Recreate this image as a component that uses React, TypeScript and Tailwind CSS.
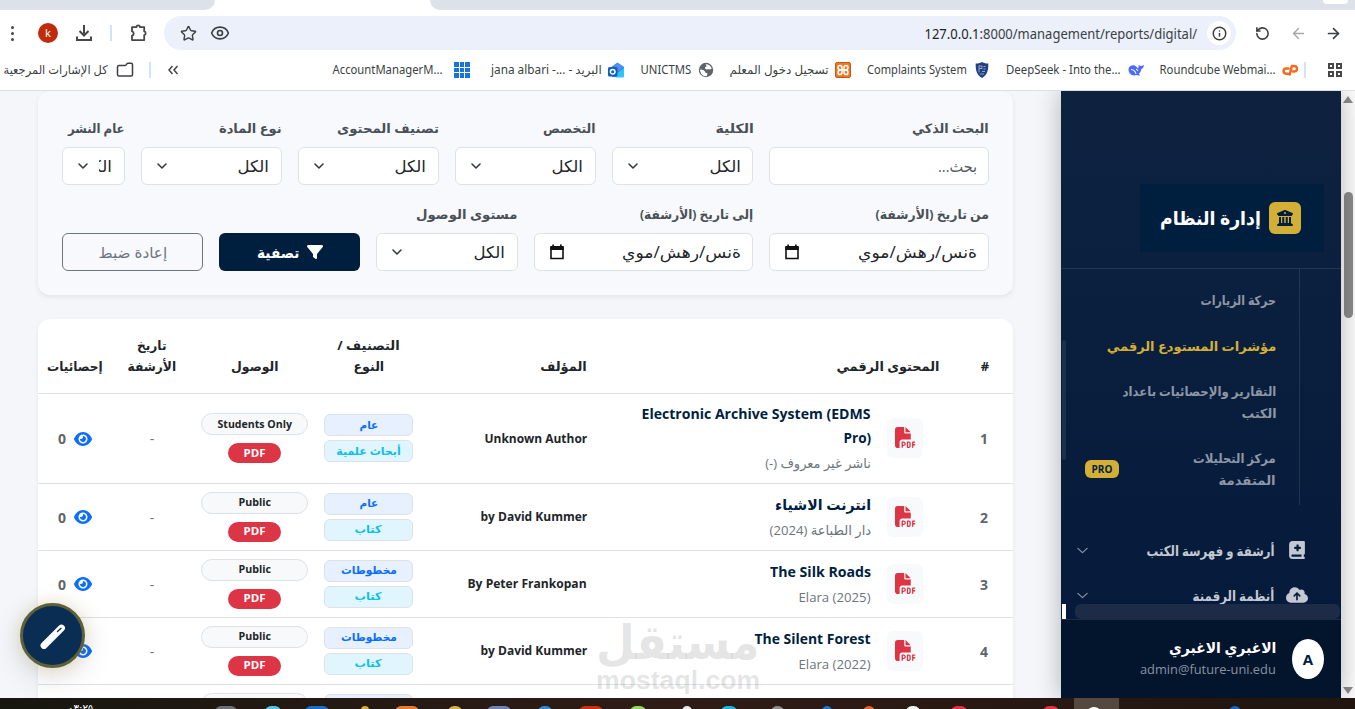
import React from 'react';
import { FaBookMedical, FaBuildingColumns, FaCloudArrowUp, FaEye, FaFilePdf, FaFilter } from 'react-icons/fa6';
import { ArrowLeft, ArrowRight, ChevronDown, Eye, Folder, Info, RotateCcw, Star } from 'lucide-react';
import clsx from 'clsx';

interface FitProps {
  w: number;
  children: React.ReactNode;
  className?: string;
  dir?: 'rtl' | 'ltr' | 'auto';
}

/** One line of text squeezed or stretched horizontally to a fixed width */
const Fit: React.FC<FitProps> = ({ w, children, className, dir = 'auto' }) => {
  const ref = React.useRef<HTMLSpanElement>(null);
  const [scale, setScale] = React.useState(1);

  React.useLayoutEffect(() => {
    if (ref.current && ref.current.offsetWidth > 0) setScale(w / ref.current.offsetWidth);
  }, [w, children]);

  return (
    <span className="flex shrink-0 justify-center" style={{ width: w }}>
      <span
        ref={ref}
        dir={dir}
        className={clsx('inline-block shrink-0 whitespace-nowrap', className)}
        style={{ transform: `scaleX(${scale})` }}
      >
        {children}
      </span>
    </span>
  );
};

/* ---------- Browser chrome ---------- */

const PuzzleIcon = () => (
  <svg viewBox="0 0 20 20" className="h-5 w-5" fill="none" stroke="#474747" strokeWidth="1.8">
    <path d="M3 4.200h4.400a1.800 1.800 0 0 1 3.600 0h4.200v4.200a1.900 1.900 0 0 1 0 3.700v5H3v-4.400a2.200 2.200 0 0 0 0-4.300z" strokeLinejoin="round" />
  </svg>
);

const DownloadIcon = () => (
  <svg viewBox="0 0 18 18" className="h-[18px] w-[18px]" fill="none" stroke="#474747" strokeWidth="2">
    <path d="M9 1v10M4.500 7 9 11.500 13.500 7M2 12.500V16h14v-3.500" />
  </svg>
);

const AppsIcon = () => (
  <span className="grid h-4 w-4 grid-cols-3 gap-px">
    {Array.from({ length: 9 }, (_, i) => (
      <span key={i} className="bg-[#1a73d8]" />
    ))}
  </span>
);

const OutlookIcon = () => (
  <svg viewBox="0 0 16 16" className="h-4 w-4">
    <path d="M4 4.500 9.500.5 16 5v8.500a1.500 1.500 0 0 1-1.500 1.500H4z" fill="#1f8fe8" />
    <path d="m6 4 3.500-3.200 6 4L10 9z" fill="#5a8cf5" />
    <path d="m16 6-8 6v3.500h6.500A1.500 1.500 0 0 0 16 14z" fill="#2cc5f6" />
    <rect x="0" y="5" width="9.500" height="9.500" rx="1.500" fill="#0f5fc0" />
    <circle cx="4.700" cy="9.700" r="2.300" fill="none" stroke="#fff" strokeWidth="1.500" />
  </svg>
);

const GlobeIcon = () => (
  <svg viewBox="0 0 16 16" className="h-4 w-4">
    <circle cx="8" cy="8" r="7.200" fill="#5f6368" />
    <path d="M2 7.500c2 0 3.500.5 4.500 1.500s.5 2 2 2 1 1.800.2 3.200C5 14.500 2.200 12 2 7.500zM7.500 2.300c2-.4 5 .7 6.200 4.200-1.400 1.700-3 .2-4 .8-1.300.5-2.900-.2-2.700-1.500.2-1 1.600-.7 1.700-1.700z" fill="#fff" />
  </svg>
);

const XamppIcon = () => (
  <svg viewBox="0 0 16 16" className="h-4 w-4">
    <rect x=".5" y=".5" width="15" height="15" rx="1.500" fill="#f37623" stroke="#c25a13" />
    <path d="M5 8h6M5.800 8C3.400 8 3 6.800 3 5.600S3.800 3.500 5 3.500 7 4.500 7 6v4c0 1.500-.8 2.500-2 2.500s-2-.9-2-2.100S3.500 8 5.800 8zM10.200 8C12.600 8 13 6.800 13 5.600s-.8-2.100-2-2.100S9 4.500 9 6v4c0 1.500.8 2.500 2 2.500s2-.9 2-2.100S12.500 8 10.200 8z" fill="none" stroke="#fff" strokeWidth="1.500" />
  </svg>
);

const ShieldIcon = () => (
  <svg viewBox="0 0 16 16" className="h-4 w-4">
    <path d="M8 0c2 1.200 4 1.600 6.300 1.600C14.500 8 13.500 13 8 16 2.500 13 1.500 8 1.700 1.600 4 1.600 6 1.200 8 0z" fill="#23407c" />
    <path d="M5 3.500v7M5 4h3v2.500H5M9.500 4.500h2M9.500 7h2M8 9.500h3M6 12h4" fill="none" stroke="#8fa6d6" strokeWidth="1" />
  </svg>
);

const DeepSeekIcon = () => (
  <svg viewBox="0 0 16 16" className="h-4 w-4">
    <path d="M.5 7C1 4 4 2.800 6.500 3.500 8 4 9 5 10 6.500c.8-1 .5-2.300.7-3.500 1 1 2 1.200 3 1 .8-.2 1.500-.6 2.100-1.200.1 2-.7 3.700-2.600 4.400-.2 2.300-1.200 3.600-2.400 4.800l1.500 1.200c-1.400.5-2.600.3-3.800-.2C4 14.600.2 11.300.5 7z" fill="#4d6bfe" />
    <path d="M3 7.500c2.500.2 4.300 2 5 4.300M8 7.300c1 0 1.500.8 1.700 1.700" fill="none" stroke="#fff" strokeWidth="1.100" />
  </svg>
);

/** cPanel mark */
const CpanelIcon = () => (
  <svg viewBox="0 0 16 16" className="h-4 w-4" fill="none" stroke="#f26b22" strokeWidth="2.500" strokeLinecap="round">
    <path d="M6.500 6.500H4.200a2.600 2.600 0 0 0 0 5.200h1.500M7.700 12.500l2.200-8.500h2.300a2.800 2.800 0 0 1 0 5.600H11" />
  </svg>
);

const BOOKMARKS = [
  { label: 'AccountManagerM...', w: 110, icon: <AppsIcon />, cls: 'gap-3 mr-[21px]' },
  { label: 'البريد - ...- jana albari', w: 111, icon: <OutlookIcon />, cls: 'gap-1.5 mr-4' },
  { label: 'UNICTMS', w: 51, icon: <GlobeIcon />, cls: 'gap-[7px] mr-4' },
  { label: 'تسجيل دخول المعلم', w: 99, icon: <XamppIcon />, cls: 'gap-1.5 mr-4' },
  { label: 'Complaints System', w: 100, icon: <ShieldIcon />, cls: 'gap-[7px] mr-4' },
  { label: 'DeepSeek - Into the...', w: 115, icon: <DeepSeekIcon />, cls: 'gap-[7px] mr-4' },
  { label: 'Roundcube Webmai...', w: 116, icon: <CpanelIcon />, cls: 'gap-1.5' },
];

const BrowserBar = () => (
  <header className="h-[91px] shrink-0 border-b border-[#dcdfdf] bg-white font-['Noto_Sans','DejaVu_Sans',sans-serif] text-[#3c3f43]">
    {/* Tab strip */}
    <div className="flex h-2.5 bg-white">
      <div className="w-[215px] rounded-br-[10px] bg-[#dde1e9]" />
      <div className="w-[215px]" />
      <div className="flex flex-1 justify-end rounded-bl-[10px] bg-[#dde1e9]">
        <div className="mr-[7px] h-1 w-[25px] rounded-b-[10px] bg-white" />
      </div>
    </div>

    {/* Address bar */}
    <div className="flex h-[46px] items-center">
      <span className="flex w-6 flex-col items-center gap-[3px]">
        {[0, 1, 2].map(i => (
          <span key={i} className="h-[3px] w-[3px] rounded-full bg-[#474747]" />
        ))}
      </span>
      <span className="ml-3.5 flex h-5 w-5 items-center justify-center rounded-full bg-[#bf2c0b] text-[11px] text-white">k</span>
      <span className="ml-[17px]"><DownloadIcon /></span>
      <span className="ml-[17px] h-4 w-0.5 bg-[#d3e3fd]" />
      <span className="ml-[17px]"><PuzzleIcon /></span>
      <div className="ml-[15px] flex h-[34px] w-[1072px] items-center rounded-full bg-[#ebf0fa] pr-[5px] pl-4">
        <Star size={17} strokeWidth={2} />
        <Eye size={20} strokeWidth={2} className="ml-[13px]" />
        <span className="ml-auto flex text-[14px]">
          <Fit w={273} dir="ltr">
            <span className="text-[#1f1f1f]">127.0.0.1</span>:8000/management/reports/digital/
          </Fit>
        </span>
        <span className="ml-[10px] flex h-6 w-6 items-center justify-center rounded-full bg-white">
          <Info size={15} strokeWidth={2.4} />
        </span>
      </div>
      <RotateCcw size={15} strokeWidth={2.5} className="ml-[19px]" />
      <ArrowLeft size={17} strokeWidth={2} className="ml-5 text-[#a5a7ab]" />
      <ArrowRight size={17} strokeWidth={2.4} className="ml-[18px]" />
    </div>

    {/* Bookmarks */}
    <div className="flex h-7 items-center text-[12px]">
      <span className="ml-1 flex"><Fit w={104}>كل الإشارات المرجعية</Fit></span>
      <Folder size={18} strokeWidth={2} className="ml-2 -scale-x-100" />
      <span className="ml-[15px] h-4 w-0.5 bg-[#d3e3fd]" />
      <svg viewBox="0 0 12 10" className="ml-4 h-2.5 w-3" fill="none" stroke="#474747" strokeWidth="1.500">
        <path d="M5.500 1 2 5l3.500 4M10.500 1 7 5l3.500 4" />
      </svg>
      <div className="ml-[153px] flex items-center">
        {BOOKMARKS.map(b => (
          <span key={b.label} className={clsx('flex items-center', b.cls)}>
            <Fit w={b.w}>{b.label}</Fit>
            {b.icon}
          </span>
        ))}
      </div>
      <span className="ml-1.5 h-4 w-0.5 bg-[#d3e3fd]" />
      <span className="ml-[22px] grid grid-cols-2 gap-0.5">
        {[0, 1, 2, 3].map(i => (
          <span key={i} className="h-[6px] w-[6px] border-2 border-[#474747]" />
        ))}
      </span>
    </div>
  </header>
);

/* ---------- Filters ---------- */

const Field: React.FC<{ label: string; w: number; span: string; children: React.ReactNode }> = ({ label, w, span, children }) => (
  <div className={span}>
    <div className="mb-2 flex h-[21px] items-center text-[13px] font-bold text-[#495057]">
      <Fit w={w} dir="rtl">{label}</Fit>
    </div>
    <div className="flex h-[38px] items-center rounded-md border border-[#dee2e6] bg-white px-[11px] text-[16px] text-[#212529]">
      {children}
    </div>
  </div>
);

const SelectBody = () => (
  <>
    <span className="mr-px flex"><Fit w={31}>الكل</Fit></span>
    <ChevronDown size={16} strokeWidth={2.4} className="mr-auto ml-px shrink-0 text-[#343a40]" />
  </>
);

const DateBody = () => (
  <>
    <Fit w={119} dir="rtl">ةنس/رهش/موي</Fit>
    <svg viewBox="0 0 14 16" className="mr-auto ml-1 h-4 w-3.5">
      <path d="M1 3.500h12V14.500H1z" fill="none" stroke="#111" strokeWidth="1.600" />
      <path d="M.3 2h13.400v4H.3zM2.300.5h1.700V2H2.300zM10 .5h1.700V2H10z" fill="#111" />
    </svg>
  </>
);

const FilterCard = () => (
  <section className="h-[204px] rounded-xl bg-[#f8f9fc] px-6 pt-[27px] shadow-[0_2px_5px_rgba(0,0,0,0.08)]">
    <div className="grid grid-cols-12 gap-x-4 gap-y-[19px]">
      <Field label="البحث الذكي" w={77} span="col-span-3">
        <span className="text-[#595c5f]"><Fit w={39} dir="rtl">بحث...</Fit></span>
      </Field>
      <Field label="الكلية" w={38} span="col-span-2"><SelectBody /></Field>
      <Field label="التخصص" w={53} span="col-span-2"><SelectBody /></Field>
      <Field label="تصنيف المحتوى" w={102} span="col-span-2"><SelectBody /></Field>
      <Field label="نوع المادة" w={63} span="col-span-2"><SelectBody /></Field>
      <Field label="عام النشر" w={57} span="col-span-1">
        <span className="mr-px flex w-[13px] overflow-hidden"><Fit w={31}>الكل</Fit></span>
        <ChevronDown size={16} strokeWidth={2.4} className="mr-auto ml-px shrink-0 text-[#343a40]" />
      </Field>
      <Field label="من تاريخ (الأرشفة)" w={113} span="col-span-3"><DateBody /></Field>
      <Field label="إلى تاريخ (الأرشفة)" w={113} span="col-span-3"><DateBody /></Field>
      <Field label="مستوى الوصول" w={102} span="col-span-2"><SelectBody /></Field>
      <button className="col-span-2 mt-[29px] flex h-[38px] items-center justify-center gap-2 rounded-md bg-[#001f3f] text-[15px] font-semibold text-white">
        <FaFilter size={16} />
        <Fit w={42}>تصفية</Fit>
      </button>
      <button className="col-span-2 mt-[29px] flex h-[38px] items-center justify-center rounded-md border border-[#6c757d] text-[15px] text-[#6c757d]">
        <Fit w={69}>إعادة ضبط</Fit>
      </button>
    </div>
  </section>
);

/* ---------- Table ---------- */

interface Line {
  text: string;
  w: number;
}

interface BookRow {
  title: Line[];
  sub: Line;
  author: Line;
  category: Line;
  kind: Line;
  access: Line;
}

const PUBLIC = { text: 'Public', w: 32 };
const BOOK = { text: 'كتاب', w: 27 };

const ROWS: BookRow[] = [
  {
    title: [{ text: 'Electronic Archive System (EDMS', w: 229 }, { text: 'Pro)', w: 28 }],
    sub: { text: 'ناشر غير معروف (-)', w: 106 },
    author: { text: 'Unknown Author', w: 103 },
    category: { text: 'عام', w: 19 },
    kind: { text: 'أبحاث علمية', w: 64 },
    access: { text: 'Students Only', w: 74 },
  },
  {
    title: [{ text: 'انترنت الاشياء', w: 96 }],
    sub: { text: 'دار الطباعة (2024)', w: 102 },
    author: { text: 'by David Kummer', w: 107 },
    category: { text: 'عام', w: 19 },
    kind: BOOK,
    access: PUBLIC,
  },
  {
    title: [{ text: 'The Silk Roads', w: 101 }],
    sub: { text: 'Elara (2025)', w: 72 },
    author: { text: 'By Peter Frankopan', w: 119 },
    category: { text: 'مخطوطات', w: 56 },
    kind: BOOK,
    access: PUBLIC,
  },
  {
    title: [{ text: 'The Silent Forest', w: 116 }],
    sub: { text: 'Elara (2022)', w: 72 },
    author: { text: 'by David Kummer', w: 107 },
    category: { text: 'مخطوطات', w: 56 },
    kind: BOOK,
    access: PUBLIC,
  },
];

const COLS = 'grid grid-cols-[58px_352px_182px_105px_123px_82px_73px]';

const ContentTable = () => (
  <section className="mt-6 rounded-xl bg-white shadow-[0_2px_5px_rgba(0,0,0,0.06)]">
    <div className={clsx(COLS, 'h-[75px] items-end border-b border-[#dee2e6] pb-4 text-[13px] leading-[21px] font-bold text-[#212529]')}>
      <span className="pl-0.5 text-center">#</span>
      <span className="flex pr-4"><Fit w={103}>المحتوى الرقمي</Fit></span>
      <span className="flex pr-4"><Fit w={47}>المؤلف</Fit></span>
      <span className="flex flex-col items-center">
        <Fit w={62} dir="rtl">التصنيف /</Fit>
        <Fit w={31}>النوع</Fit>
      </span>
      <span className="flex justify-center"><Fit w={47}>الوصول</Fit></span>
      <span className="flex flex-col items-center">
        <Fit w={30}>تاريخ</Fit>
        <Fit w={49}>الأرشفة</Fit>
      </span>
      <span className="flex justify-center pl-px"><Fit w={56}>إحصائيات</Fit></span>
    </div>

    {ROWS.map((row, idx) => (
      <div key={idx} className={clsx(COLS, 'items-center border-b border-[#dee2e6]', idx === 0 ? 'h-[90px]' : 'h-[67px]')}>
        <span className="text-center text-[14px] font-bold text-[#5f656b]">{idx + 1}</span>
        <div className="flex items-center gap-4 pr-8 pb-px">
          <span className="flex h-10 w-9 items-center justify-center rounded-md bg-[#f8f9fa]">
            <FaFilePdf size={21} className="mb-px text-[#dc3545]" />
          </span>
          <div className="flex flex-col items-start">
            {row.title.map(line => (
              <span key={line.text} className="flex text-[15px] leading-6 font-bold text-[#001f3f]">
                <Fit w={line.w}>{line.text}</Fit>
              </span>
            ))}
            <span className="mt-0.5 flex text-[13px] leading-6 text-[#6c757d]">
              <Fit w={row.sub.w}>{row.sub.text}</Fit>
            </span>
          </div>
        </div>
        <div className="flex pr-4 text-[13px] font-bold text-[#212529]">
          <Fit w={row.author.w}>{row.author.text}</Fit>
        </div>
        <div className="flex flex-col items-center gap-1 pb-px text-[11px] font-bold">
          <span className="flex h-[22px] w-[89px] items-center justify-center rounded-md border border-[#dee2e6] bg-[#e7f0ff] text-[#0d6efd]">
            <Fit w={row.category.w}>{row.category.text}</Fit>
          </span>
          <span className="flex h-[22px] w-[89px] items-center justify-center rounded-md border border-[#dee2e6] bg-[#e1f5ff] text-[#0dbfea]">
            <Fit w={row.kind.w}>{row.kind.text}</Fit>
          </span>
        </div>
        <div className="flex flex-col items-center gap-2 pb-px text-[11px]">
          <span className="flex h-[22px] w-[107px] items-center justify-center rounded-full border border-[#dee2e6] bg-[#f8f9fa] font-bold text-[#212529]">
            <Fit w={row.access.w}>{row.access.text}</Fit>
          </span>
          <span className="flex h-5 w-[53px] items-center justify-center rounded-full bg-[#dc3545] font-bold text-white">
            <Fit w={22}>PDF</Fit>
          </span>
        </div>
        <span className="text-center text-[14px] text-[#6c757d]">-</span>
        <span className="flex items-center justify-center gap-2 pl-px text-[14px] font-bold text-[#5f656b]">
          <FaEye size={18} className="text-[#0d6efd]" />
          <span>0</span>
        </span>
      </div>
    ))}

    {/* Next row, only its badges reach into the viewport */}
    <div className={clsx(COLS, 'h-[67px] items-start')}>
      <span className="col-start-4 mt-[9px] h-[22px] w-[89px] justify-self-center rounded-md border border-[#dee2e6] bg-[#e7f0ff]" />
      <span className="col-start-5 mt-2 h-[22px] w-[107px] justify-self-center rounded-full border border-[#dee2e6] bg-[#f8f9fa]" />
    </div>
  </section>
);

/* ---------- Sidebar ---------- */

const SUB_LINKS = [
  { lines: [{ text: 'حركة الزيارات', w: 75 }], cls: 'mt-[20px] text-[#8e97a6]' },
  { lines: [{ text: 'مؤشرات المستودع الرقمي', w: 169 }], cls: 'mt-[24px] text-[#d4af37]' },
  {
    lines: [{ text: 'التقارير والإحصائيات باعداد', w: 154 }, { text: 'الكتب', w: 35 }],
    cls: 'mt-[23px] text-[#8e97a6]',
  },
  { lines: [{ text: 'مركز التحليلات', w: 83 }, { text: 'المتقدمة', w: 57 }], cls: 'mt-[23px] text-[#8e97a6]', pro: true },
];

const NAV_GROUPS = [
  { text: 'أرشفة و فهرسة الكتب', w: 128, icon: <FaBookMedical size={18} />, cls: 'mt-[33px]' },
  { text: 'أنظمة الرقمنة', w: 82, icon: <FaCloudArrowUp size={22} className="shrink-0" />, cls: 'mt-[21px]' },
];

const Sidebar = () => (
  <aside className="relative z-10 flex h-[607px] w-[280px] shrink-0 flex-col bg-linear-to-b from-[#0e2240] to-[#051a3a] shadow-[0_0_24px_rgba(0,0,0,0.28)]">
    <div className="h-[178px] shrink-0 border-b border-white/10 pt-[93px] pr-[17px]">
      <div className="flex h-[68px] w-[184px] items-center gap-2 bg-[#001f3f] pr-[23px]">
        <span className="flex h-8 w-8 items-center justify-center rounded-md bg-[#d4af37] text-[#001f3f]">
          <FaBuildingColumns size={16} />
        </span>
        <span className="flex text-[19px] font-bold text-white"><Fit w={101}>إدارة النظام</Fit></span>
      </div>
    </div>

    <div className="flex h-[335px] shrink-0 flex-col overflow-hidden pr-[17px]">
      <div className="mr-6 h-[236px] shrink-0 border-r border-white/10 pr-[23px]">
        {SUB_LINKS.map(link => (
          <div key={link.lines[0].text} className={clsx('flex items-center justify-between', link.cls)}>
            <div className="flex flex-col items-start text-[13px] leading-[22px] font-semibold">
              {link.lines.map(line => (
                <Fit key={line.text} w={line.w}>{line.text}</Fit>
              ))}
            </div>
            {link.pro && (
              <span className="ml-6 flex h-[18px] w-[34px] items-center justify-center rounded-md bg-[#d4af37] text-[10px] font-bold text-[#001f3f]">
                <Fit w={21}>PRO</Fit>
              </span>
            )}
          </div>
        ))}
      </div>
      {NAV_GROUPS.map(group => (
        <div key={group.text} className={clsx('flex h-6 shrink-0 items-center text-[#c3c9d2]', group.cls)}>
          <span className="mr-4 flex w-[22px] justify-center">{group.icon}</span>
          <span className="mr-3 flex text-[14px] font-semibold"><Fit w={group.w}>{group.text}</Fit></span>
          <ChevronDown size={17} strokeWidth={1.400} className="mr-auto ml-[13px] scale-x-110 text-[#8e97a6]" />
        </div>
      ))}
    </div>

    {/* Inner scrollbars */}
    <div className="flex h-[15px] shrink-0 justify-between pr-px pl-px">
      <span className="h-full w-[265px] rounded-md bg-[#1c2c47]" />
      <span className="h-full w-1 bg-white" />
    </div>
    <span className="absolute top-[249px] left-px h-[120px] w-1 rounded-sm bg-[#1c2f4f]" />

    <div className="flex flex-1 items-center gap-4 border-t border-white/10 bg-[#03142d] pr-[17px]">
      <span className="flex h-10 w-8 items-center justify-center rounded-[50%] bg-white text-[15px] font-bold text-[#001f3f]">A</span>
      <div className="flex flex-col items-start pb-0.5">
        <span className="flex text-[15px] leading-[22px] font-bold text-white"><Fit w={107}>الاغبري الاغبري</Fit></span>
        <span className="flex text-[13px] leading-[22px] text-[#8a93a2]"><Fit w={136}>admin@future-uni.edu</Fit></span>
      </div>
    </div>
  </aside>
);

/* ---------- Overlays ---------- */

const FloatingButton = () => (
  <button className="absolute top-[603px] left-5 z-20 flex h-[65px] w-[65px] items-center justify-center rounded-full border-[3px] border-[#5d6038] bg-[#0a2d54] shadow-[0_0_14px_rgba(212,175,55,0.25),0_8px_30px_rgba(0,0,0,0.15)]">
    <svg viewBox="0 0 28 28" className="h-7 w-7">
      <path d="M5 23.500 22.500 6" stroke="#fff" strokeWidth="6.800" strokeLinecap="round" />
      <path d="m18.500 9.500 3.500-3.300" stroke="#0a2d54" strokeWidth="1.300" strokeLinecap="round" />
    </svg>
  </button>
);

const Watermark = () => (
  <div className="absolute top-[615px] left-[595px] z-10 flex w-[166px] flex-col items-center font-bold text-[#77797d]/20">
    <span className="flex h-[53px] items-center font-['DejaVu_Sans',sans-serif] text-[48px] leading-none"><Fit w={164}>مستقل</Fit></span>
    <span className="flex font-['Liberation_Sans',sans-serif] text-[25px] leading-6"><Fit w={164}>mostaql.com</Fit></span>
  </div>
);

/* Tops of the pinned app icons: left edge, width, colour */
const TASKS: [number, number, string][] = [
  [215, 22, 'bg-[#6d6f74]'], [265, 16, 'bg-[#55c3ee]'], [305, 24, 'bg-[#1b6ec8]'], [361, 8, 'bg-[#e0a83a]'],
  [395, 24, 'bg-[#e27b38]'], [448, 14, 'bg-[#d6b04a]'], [487, 24, 'bg-[#6f83b8]'], [538, 14, 'bg-[#2c8ddd]'],
  [579, 24, 'bg-[#c8330f]'], [630, 16, 'bg-[#8ed85c]'], [682, 10, 'bg-[#e5e8f0]'], [721, 16, 'bg-[#1fb5dd]'],
  [771, 13, 'bg-[#8d8d8d]'], [822, 10, 'bg-[#1878d2]'], [863, 12, 'bg-[#e8662c]'], [906, 14, 'bg-[#f2f2f2]'],
  [951, 16, 'bg-[#e03340]'], [1043, 16, 'bg-[#e03340]'], [1229, 12, 'bg-[#1667c9]'],
];

const Taskbar = () => (
  <footer className="relative h-[11px] shrink-0 overflow-hidden bg-linear-to-r from-[#17170f] via-[#2f1c17] to-[#20150f]">
    <span className="absolute top-[5px] left-[68px] font-['DejaVu_Sans',sans-serif] text-[11px] leading-3 text-white"><Fit w={25} dir="rtl">٠٣:٢٥</Fit></span>
    <span className="absolute top-0 left-[1074px] h-full w-[45px] bg-[#55483f]" />
    <span className="absolute top-[9px] left-[1086px] h-2 w-4 rounded-t-full bg-white" />
    {TASKS.map(([left, width, color]) => (
      <span key={left} className={clsx('absolute top-2 h-3 rounded-t-md', color)} style={{ left, width }} />
    ))}
  </footer>
);

const App: React.FC = () => (
  <div className="relative flex h-[709px] w-[1355px] flex-col overflow-hidden bg-white">
    <BrowserBar />
    <div dir="rtl" className="flex h-[607px] shrink-0 overflow-hidden font-['Open_Sans','DejaVu_Sans',sans-serif]">
      {/* Page scrollbar */}
      <div className="flex w-[14px] shrink-0 flex-col items-center bg-[#fcfcfc] pt-[5px]">
        <span className="h-0 w-0 border-x-[5px] border-b-[7px] border-x-transparent border-b-[#8b8b8b]" />
        <span className="mt-[89px] h-[126px] w-[9px] rounded-full bg-[#8b8b8b]" />
        <span className="mt-[369px] h-0 w-0 border-x-[5px] border-t-[7px] border-x-transparent border-t-[#8b8b8b]" />
      </div>
      <Sidebar />
      <main className="h-[607px] flex-1 overflow-hidden bg-[#f4f6fa] pr-12 pl-[38px]">
        <FilterCard />
        <ContentTable />
      </main>
    </div>
    <Taskbar />
    <Watermark />
    <div className="pointer-events-none absolute inset-x-0 top-0 h-[698px] overflow-hidden">
      <FloatingButton />
    </div>
  </div>
);

export default App;
